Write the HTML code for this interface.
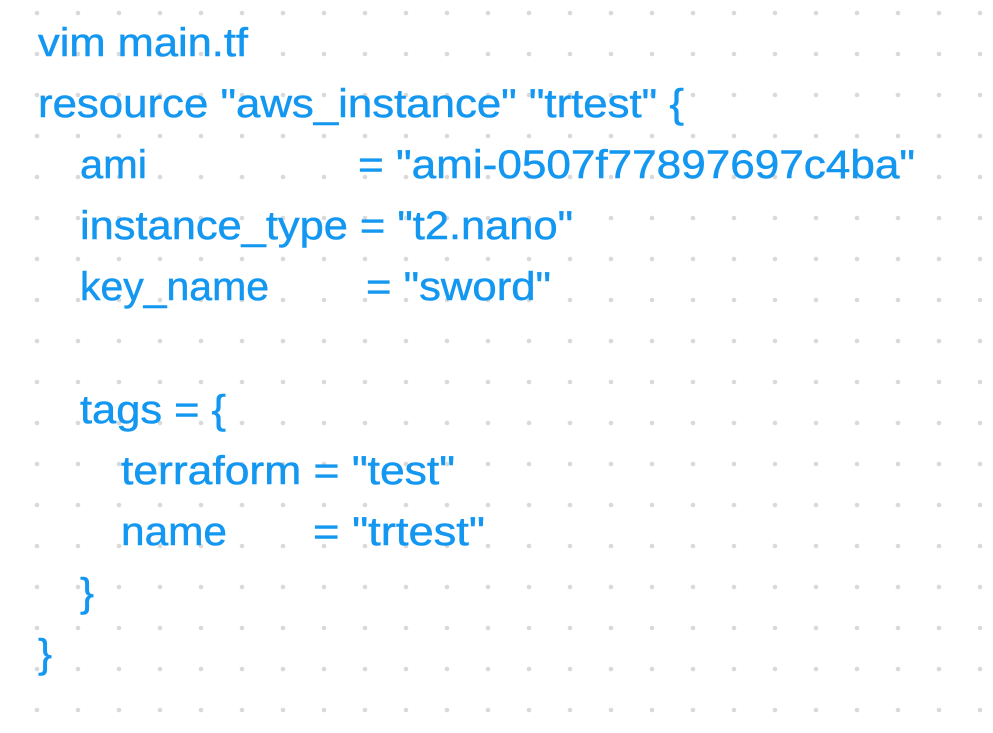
<!DOCTYPE html>
<html><head><style>html,body{margin:0;padding:0;background:#fff;}</style></head>
<body>
<svg width="993" height="728" xmlns="http://www.w3.org/2000/svg">
<defs><pattern id="d" x="0" y="0" width="41" height="41" patternUnits="userSpaceOnUse"><circle cx="37" cy="13" r="2.3" fill="#d9d9d9"/></pattern></defs>
<rect width="993" height="728" fill="url(#d)"/>
<g font-family="Liberation Sans, sans-serif" font-size="40" fill="#1397f1" stroke="#1397f1" stroke-width="0.5">
<text x="38" y="56" textLength="210" lengthAdjust="spacingAndGlyphs">vim main.tf</text>
<text x="38" y="117" textLength="646" lengthAdjust="spacingAndGlyphs">resource "aws_instance" "trtest" {</text>
<text x="80" y="178" textLength="67" lengthAdjust="spacingAndGlyphs">ami</text>
<text x="358" y="178" textLength="557" lengthAdjust="spacingAndGlyphs">= "ami-0507f77897697c4ba"</text>
<text x="80" y="239" textLength="493" lengthAdjust="spacingAndGlyphs">instance_type = "t2.nano"</text>
<text x="80" y="300" textLength="189" lengthAdjust="spacingAndGlyphs">key_name</text>
<text x="366" y="300" textLength="185" lengthAdjust="spacingAndGlyphs">= "sword"</text>
<text x="80" y="423" textLength="146" lengthAdjust="spacingAndGlyphs">tags = {</text>
<text x="121" y="484" textLength="334" lengthAdjust="spacingAndGlyphs">terraform = "test"</text>
<text x="121" y="545" textLength="106" lengthAdjust="spacingAndGlyphs">name</text>
<text x="313" y="545" textLength="172" lengthAdjust="spacingAndGlyphs">= "trtest"</text>
<text x="80" y="606" textLength="14" lengthAdjust="spacingAndGlyphs">}</text>
<text x="38" y="667" textLength="14" lengthAdjust="spacingAndGlyphs">}</text>
</g>
</svg>
</body></html>
